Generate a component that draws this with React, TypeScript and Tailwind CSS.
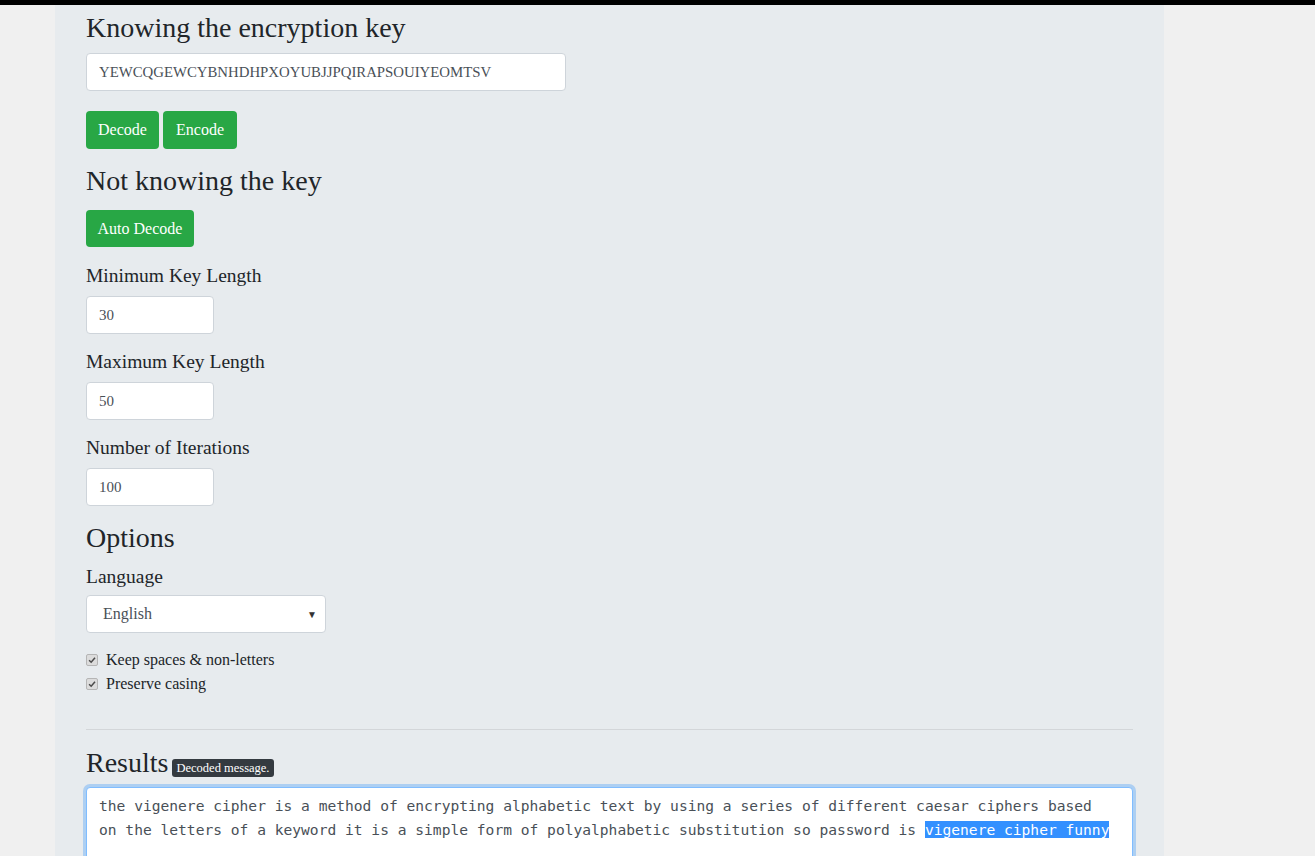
import { useState } from "react";

const serif = "font-['Liberation_Serif','DejaVu_Serif',serif]";

function Field({ label, value, first }: { label: string; value: string; first?: boolean }) {
  return (
    <div className={first ? "mt-[14px]" : "mt-[13px]"}>
      <label className="block pt-[1px] text-[19.5px] leading-[27px] text-[#212529]">{label}</label>
      <input
        readOnly
        value={value}
        className={`mt-[7px] block h-[38px] w-[128px] rounded-[4px] border border-[#ced4da] bg-white px-[12px] text-[15px] text-[#495057] outline-none ${serif}`}
      />
    </div>
  );
}

function Check({ label }: { label: string }) {
  return (
    <label className="flex h-[24px] items-center gap-[8px] text-[16px] text-[#212529]">
      <span className="flex h-[12px] w-[12px] items-center justify-center rounded-[2px] border border-[#b5b5b5] bg-[#dcdcdc]">
        <svg viewBox="0 0 12 12" className="h-[10px] w-[10px]">
          <path d="M2.5 6.2 L5 8.6 L9.6 3.2" fill="none" stroke="#4a4a4a" strokeWidth="1.8" />
        </svg>
      </span>
      {label}
    </label>
  );
}

export default function App() {
  const [lang] = useState("English");

  return (
    <div className={`min-h-screen bg-[#f0f0f0] ${serif}`}>
      <div className="h-[5px] bg-black" />
      <div className="ml-[55px] w-[1109px] bg-[#e7ebee] px-[31px] pb-[60px] pt-[6px]">
        <h4 className="text-[28px] leading-[34px] text-[#212529]">Knowing the encryption key</h4>
        <input
          readOnly
          value="YEWCQGEWCYBNHDHPXOYUBJJPQIRAPSOUIYEOMTSV"
          className={`mt-[8px] block h-[38px] w-[480px] rounded-[4px] border border-[#ced4da] bg-white px-[12px] text-[14.8px] text-[#495057] outline-none ${serif}`}
        />
        <div className="mt-[20px] flex gap-[4px]">
          <button className="h-[38px] w-[73px] rounded-[4px] bg-[#28a745] text-[16px] text-white">Decode</button>
          <button className="h-[38px] w-[74px] rounded-[4px] bg-[#28a745] text-[16px] text-white">Encode</button>
        </div>

        <h4 className="mt-[15px] text-[28px] leading-[34px] text-[#212529]">Not knowing the key</h4>
        <button className="mt-[12px] h-[37px] w-[108px] rounded-[4px] bg-[#28a745] text-[16px] text-white">
          Auto Decode
        </button>

        <Field first label="Minimum Key Length" value="30" />
        <Field label="Maximum Key Length" value="50" />
        <Field label="Number of Iterations" value="100" />

        <h4 className="mt-[15px] text-[28px] leading-[34px] text-[#212529]">Options</h4>
        <label className="mt-[7px] block pt-[1px] text-[19.5px] leading-[27px] text-[#212529]">Language</label>
        <div className="mt-[5px] flex h-[38px] w-[240px] items-center justify-between rounded-[4px] border border-[#ced4da] bg-white pl-[16px] pr-[8px] text-[16px] text-[#495057]">
          <span>{lang}</span>
          <span className="text-[10px] text-[#333]">▼</span>
        </div>

        <div className="mt-[15px]">
          <Check label="Keep spaces & non-letters" />
          <Check label="Preserve casing" />
        </div>

        <hr className="mt-[33px] border-t border-[#d3d6d9]" />

        <div className="mt-[16px] flex items-end gap-[4px]">
          <h4 className="text-[28px] leading-[34px] text-[#212529]">Results</h4>
          <span className="mb-[3px] rounded-[3px] bg-[#343a40] px-[4px] text-[12.5px] leading-[18px] text-white">
            Decoded message.
          </span>
        </div>

        <div className="mt-[7px] h-[160px] rounded-[4px] border border-[#80bdff] bg-white px-[12px] pt-[6px] font-['DejaVu_Sans_Mono',monospace] text-[14.6px] leading-[24px] text-[#495057] shadow-[0_0_0_3px_rgba(0,123,255,0.25)]">
          <div className="whitespace-pre">
            the vigenere cipher is a method of encrypting alphabetic text by using a series of different caesar ciphers based
          </div>
          <div className="whitespace-pre">
            on the letters of a keyword it is a simple form of polyalphabetic substitution so password is{" "}
            <span className="bg-[#3390ff] text-white">vigenere cipher funny</span>
          </div>
        </div>
      </div>
    </div>
  );
}
